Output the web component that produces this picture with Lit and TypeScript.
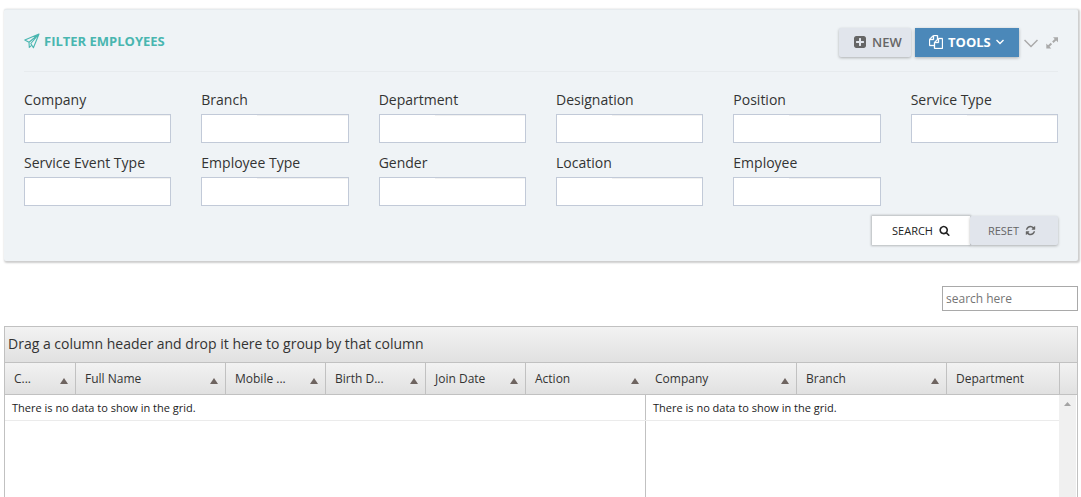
import { LitElement, html, css, svg } from "lit";
import { customElement } from "lit/decorators.js";

const FIELDS = [
  "Company", "Branch", "Department", "Designation", "Position", "Service Type",
  "Service Event Type", "Employee Type", "Gender", "Location", "Employee",
];

interface Column { title: string; size: string; sortable: boolean }

const LOCKED: Column[] = [
  { title: "C...", size: "w71", sortable: true },
  { title: "Full Name", size: "w150", sortable: true },
  { title: "Mobile ...", size: "w100", sortable: true },
  { title: "Birth D...", size: "w100", sortable: true },
  { title: "Join Date", size: "w100", sortable: true },
  { title: "Action", size: "w120", sortable: true },
];

const SCROLLING: Column[] = [
  { title: "Company", size: "w151", sortable: true },
  { title: "Branch", size: "w150", sortable: true },
  { title: "Department", size: "rest", sortable: false },
];

const solid = (d: string, cls: string) => html`
  <svg class=${cls} viewBox="0 0 1792 1792" fill="currentColor" aria-hidden="true">${svg`<path d=${d}></path>`}</svg>`;

const PLUS = "M1408 960v-128q0-26-19-45t-45-19h-320v-320q0-26-19-45t-45-19h-128q-26 0-45 19t-19 45v320h-320q-26 0-45 19t-19 45v128q0 26 19 45t45 19h320v320q0 26 19 45t45 19h128q26 0 45-19t19-45v-320h320q26 0 45-19t19-45zm256-544v960q0 119-84.5 203.5t-203.5 84.5h-960q-119 0-203.5-84.5t-84.5-203.5v-960q0-119 84.5-203.5t203.5-84.5h960q119 0 203.5 84.5t84.5 203.5z";
const FILES = "M1696 384q40 0 68 28t28 68v1216q0 40-28 68t-68 28h-960q-40 0-68-28t-28-68v-288h-544q-40 0-68-28t-28-68v-672q0-40 20-88t48-76l408-408q28-28 76-48t88-20h416q40 0 68 28t28 68v328q68-40 128-40h416zm-544 213l-299 299h299v-299zm-640-384l-299 299h299v-299zm196 647l316-316v-416h-384v416q0 40-28 68t-68 28h-416v640h512v-256q0-40 20-88t48-76zm956 804v-1152h-384v416q0 40-28 68t-68 28h-416v640h896z";
const SEARCH = "M1216 832q0-185-131.5-316.5t-316.5-131.5-316.5 131.5-131.5 316.5 131.5 316.5 316.5 131.5 316.5-131.5 131.5-316.5zm512 832q0 52-38 90t-90 38q-54 0-90-38l-343-342q-179 124-399 124-143 0-273.5-55.5t-225-150-150-225-55.5-273.5 55.5-273.5 150-225 225-150 273.5-55.5 273.5 55.5 225 150 150 225 55.5 273.5q0 220-124 399l343 343q37 37 37 90z";
const REFRESH = "M1639 1056q0 5-1 7-64 268-268 434.5t-478 166.5q-146 0-282.5-55t-243.5-157l-129 129q-19 19-45 19t-45-19-19-45v-448q0-26 19-45t45-19h448q26 0 45 19t19 45-19 45l-137 137q71 66 161 102t187 36q134 0 250-65t186-179q11-17 53-117 8-23 30-23h192q13 0 22.5 9.5t9.5 22.5zm25-800v448q0 26-19 45t-45 19h-448q-26 0-45-19t-19-45 19-45l138-138q-148-137-349-137-134 0-250 65t-186 179q-11 17-53 117-8 23-30 23h-199q-13 0-22.5-9.5t-9.5-22.5v-7q65-268 270-434.5t480-166.5q146 0 284 55.5t245 156.5l130-129q19-19 45-19t45 19 19 45z";

const base = css`
  :host { display: block; font-family: "Open Sans", "Liberation Sans", sans-serif; color: #333; }
  *, *::before, *::after { box-sizing: border-box; }
  button, input { font-family: inherit; margin: 0; }
  svg { display: block; flex: none; }
`;

@customElement("employee-filter")
export class EmployeeFilter extends LitElement {
  static styles = [base, css`
    .card { background: #eff3f6; border-top: 1px solid #e6ebee; border-radius: 2px; padding: 18px 20px 16px; box-shadow: 1px 1px 2px 1px rgba(0, 0, 0, 0.2); }
    .head { display: flex; align-items: center; justify-content: space-between; padding-bottom: 14px; border-bottom: 1px solid #e7ebee; }
    .title { display: flex; align-items: center; gap: 4px; margin: 0; font-size: 13px; line-height: 18px; font-weight: 700; color: #49b6b0; padding-bottom: 4px; }
    .plane { width: 16px; height: 16px; }
    .actions { display: flex; align-items: center; }
    .btn { display: flex; align-items: center; justify-content: center; height: 29px; border: 0; padding: 0 14px; font-size: 13px; line-height: 18px; white-space: nowrap; background: #e1e5ec; color: #666; box-shadow: 0 1px 3px rgba(0, 0, 0, 0.28); cursor: pointer; }
    .head .btn { justify-content: flex-start; padding: 0 0 1px 14px; }
    .new { width: 72px; gap: 5px; margin-right: 4px; border-radius: 2px; font-weight: 600; }
    .tools { width: 104px; gap: 5px; background: #4b88b9; color: #fff; font-weight: 700; }
    .files { width: 14px; height: 14px; stroke: currentColor; stroke-width: 40; }
    .small { font-size: 11px; gap: 6px; }
    .search { width: 98px; background: #fff; color: #222; box-shadow: 0 0 2px 1px rgba(0, 0, 0, 0.24); }
    .reset { width: 88px; padding: 0 16px 0 12px; border-radius: 2px; }
    .i14 { width: 14px; height: 14px; }
    .i11 { width: 11px; height: 11px; }
    .caret { width: 8px; height: 8px; }
    .bare { display: flex; border: 0; padding: 0; background: none; color: #aaa; cursor: pointer; }
    .collapse { margin: 0 8px 0 5px; }
    .vee { width: 14px; height: 14px; }
    .expand { width: 12px; height: 12px; }
    .fields { display: grid; grid-template-columns: repeat(6, minmax(0, 1fr)); gap: 10px 30px; padding-top: 18px; }
    .field { display: flex; flex-direction: column; gap: 4px; font-size: 14px; line-height: 20px; white-space: nowrap; }
    .field input { width: 100%; height: 29px; border: 1px solid #c2cad8; border-radius: 0; background: linear-gradient(#f1f1f1, #f1f1f1) 55px 0 / 100% 1px no-repeat #fff; padding: 0 6px; font-size: 14px; }
    .submit { display: flex; justify-content: flex-end; padding-top: 10px; }
  `];

  render() {
    return html`
      <section class="card">
        <div class="head">
          <h2 class="title">
            <svg class="plane" viewBox="0 0 16 16" fill="none" stroke="currentColor" stroke-width="1.1" stroke-linejoin="round" aria-hidden="true">
              <path d="M15 1 .8 7 5 9.200 15 1 6.800 10.500l2.600 4.200L15 1M5 9.200l.3 5.200 2.500-2.200"></path>
            </svg>
            FILTER EMPLOYEES
          </h2>
          <div class="actions">
            <button type="button" class="btn new">${solid(PLUS, "i14")}NEW</button>
            <button type="button" class="btn tools">${solid(FILES, "files")}TOOLS
              <svg class="caret" viewBox="0 0 8 8" fill="none" stroke="currentColor" stroke-width="1.400" aria-hidden="true"><path d="M0.500 2 4 5.500 7.500 2"></path></svg>
            </button>
            <button type="button" class="bare collapse" aria-label="Collapse">
              <svg class="vee" viewBox="0 0 14 14" fill="none" stroke="currentColor" stroke-width="1.500" aria-hidden="true"><path d="M0.500 4 7 10.500 13.500 4"></path></svg>
            </button>
            <button type="button" class="bare" aria-label="Full screen">
              <svg class="expand" viewBox="0 0 12 12" fill="currentColor" stroke="currentColor" aria-hidden="true">
                <path d="M7 .3h5v5zM.3 6.500v5h5z" stroke="none"></path><path d="M10 2.200 6.800 5.200M5.400 6.500 2 9.800" stroke-width="2"></path>
              </svg>
            </button>
          </div>
        </div>
        <form @submit=${(e: Event) => e.preventDefault()}>
          <div class="fields">
            ${FIELDS.map((name) => html`<label class="field">${name}<input type="text" /></label>`)}
          </div>
          <div class="submit">
            <button type="submit" class="btn small search">SEARCH ${solid(SEARCH, "i11")}</button>
            <button type="reset" class="btn small reset">RESET ${solid(REFRESH, "i11")}</button>
          </div>
        </form>
      </section>`;
  }
}

@customElement("employee-grid")
export class EmployeeGrid extends LitElement {
  static styles = [base, css`
    :host { display: flex; flex-direction: column; border: 1px solid #c1c1c1; border-bottom: 0; background: #fff; }
    .group { padding: 6px 3px 7px; font-size: 14px; line-height: 22px; background: linear-gradient(#f2f2f2, #e1e1e1); border-bottom: 1px solid #c1c1c1; }
    .panes { display: flex; flex: 1; }
    .locked { width: 641px; flex: none; border-right: 1px solid #c1c1c1; }
    .free { flex: 1; min-width: 0; }
    table { width: 100%; table-layout: fixed; border-collapse: separate; border-spacing: 0; }
    th { height: 32px; padding: 0 7px 0 9px; font-size: 12px; font-weight: 400; text-align: left; background: linear-gradient(#f2f2f2, #e1e1e1); border-right: 1px solid #c1c1c1; border-bottom: 1px solid #c1c1c1; }
    .locked th:last-child { border-right: 0; }
    .free th:last-child { border-right: 0; }
    .w71 { width: 71px; } .w100 { width: 100px; } .w120 { width: 120px; } .w150 { width: 150px; } .w151 { width: 151px; }
    .cell { display: flex; align-items: center; justify-content: space-between; line-height: 18px; white-space: nowrap; }
    .arrow { width: 8px; height: 6px; margin-top: 5px; color: #6e6460; }
    td { height: 26px; padding: 0 7px; font-size: 11px; line-height: 18px; color: #222; border-bottom: 1px solid #ebebeb; }
    .rail { width: 18px; display: flex; flex-direction: column; }
    .corner { height: 32px; background: linear-gradient(#f2f2f2, #e1e1e1); border-left: 1px solid #c1c1c1; border-bottom: 1px solid #c1c1c1; }
    .track { flex: 1; width: 17px; padding: 7px 5px; background: #f0f0f0; }
    .up { width: 7px; height: 4px; color: #a3a3a3; }
  `];

  private pane(cls: string, columns: Column[]) {
    return html`
      <div class=${cls}>
        <table>
          <thead><tr>${columns.map((c) => html`
            <th class=${c.size} scope="col"><div class="cell"><span>${c.title}</span>${c.sortable
              ? html`<svg class="arrow" viewBox="0 0 8 6" fill="currentColor" aria-hidden="true"><path d="M0 6 4 0l4 6z"></path></svg>`
              : ""}</div></th>`)}</tr></thead>
          <tbody><tr><td colspan=${columns.length}>There is no data to show in the grid.</td></tr></tbody>
        </table>
      </div>`;
  }

  render() {
    return html`
      <div class="group">Drag a column header and drop it here to group by that column</div>
      <div class="panes">
        ${this.pane("locked", LOCKED)}
        ${this.pane("free", SCROLLING)}
        <div class="rail">
          <div class="corner"></div>
          <div class="track"><svg class="up" viewBox="0 0 7 4" fill="currentColor" aria-hidden="true"><path d="M0 4 3.500 0 7 4z"></path></svg></div>
        </div>
      </div>`;
  }
}

@customElement("app-root")
export class AppRoot extends LitElement {
  static styles = [base, css`
    :host { display: flex; flex-direction: column; min-height: 100vh; padding: 9px 3px 0 4px; background: #fff; box-sizing: border-box; }
    .lookup { align-self: flex-end; width: 136px; height: 25px; margin: 25px 0 15px; padding: 0 3px; border: 1px solid #a9a9a9; border-radius: 0; font-size: 12px; color: #333; }
    .lookup::placeholder { color: #757575; }
    employee-grid { flex: 1; }
  `];

  render() {
    return html`
      <employee-filter></employee-filter>
      <input class="lookup" type="text" placeholder="search here" aria-label="Search employees" />
      <employee-grid></employee-grid>`;
  }
}
